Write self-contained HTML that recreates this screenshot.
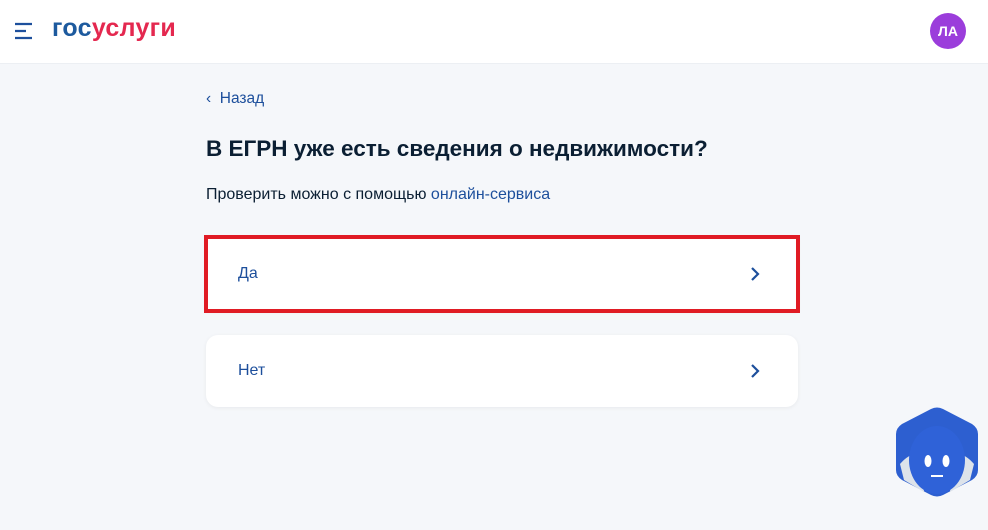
<!DOCTYPE html>
<html><head><meta charset="utf-8"><style>
body{margin:0;width:988px;height:530px;background:#f5f7fa;font-family:"Liberation Sans",sans-serif;position:relative;overflow:hidden}
.hdr{position:absolute;left:0;top:0;width:988px;height:63px;background:#fff;border-bottom:1px solid #eceff3}
.logo{position:absolute;left:52px;top:14px;font-size:25px;font-weight:bold;letter-spacing:0.3px}
.av{position:absolute;left:930px;top:13px;width:36px;height:36px;border-radius:50%;background:#9b3ddb;color:#fff;font-size:14px;font-weight:bold;text-align:center;line-height:36px}
.back{position:absolute;left:206px;top:90px;font-size:15.5px;color:#1d4f9c}
h1{position:absolute;left:206px;top:136px;margin:0;font-size:22.5px;font-weight:bold;color:#0b1f33}
.p{position:absolute;left:206px;top:186px;font-size:16px;color:#0b1f33}
.p span{color:#1d4f9c}
.card{position:absolute;left:206px;width:592px;height:72px;background:#fff;border-radius:12px;box-shadow:0 1px 4px rgba(0,0,0,.06)}
.card .t{position:absolute;left:32px;top:27px;font-size:16px;color:#1d4f9c}
.card svg{position:absolute;right:38px;top:28px}
</style></head><body>
<div class="hdr">
<svg style="position:absolute;left:15px;top:22px" width="20" height="18"><path d="M0 2h17M0 9h11M0 16h17" stroke="#1d4f9c" stroke-width="2.2"/></svg>
<div class="logo"><span style="color:#1d5a9e">гос</span><span style="color:#e4284f">услуги</span></div>
<div class="av">ЛА</div>
</div>
<div class="back">‹&nbsp;&nbsp;Назад</div>
<h1>В ЕГРН уже есть сведения о недвижимости?</h1>
<div class="p">Проверить можно с помощью <span>онлайн-сервиса</span></div>
<div class="card" style="border-radius:0;outline:4px solid #e01b24;outline-offset:-2px;top:237px;height:74px"><div class="t" style="top:28px">Да</div><svg width="10" height="16" style="top:29px"><path d="M2 2l6 6-6 6" fill="none" stroke="#1d4f9c" stroke-width="2.2"/></svg></div>
<div class="card" style="top:335px"><div class="t">Нет</div><svg width="10" height="16"><path d="M2 2l6 6-6 6" fill="none" stroke="#1d4f9c" stroke-width="2.2"/></svg></div>
<svg style="position:absolute;left:894px;top:406px" width="86" height="92">
<path d="M37 3Q43 0 49 3L78 18Q84 22 84 28V64Q84 70 78 74L49 89Q43 92 37 89L8 74Q2 70 2 64V28Q2 22 8 18Z" fill="#2d5fd0"/>
<path d="M6 58Q18 44 28 50L30 86L10 74Z" fill="#dde3ea"/>
<path d="M80 58Q68 44 58 50L56 86L76 74Z" fill="#dde3ea"/>
<ellipse cx="43" cy="54" rx="28" ry="34" fill="#2f62d8"/>
<ellipse cx="34" cy="55" rx="3.5" ry="6" fill="#fff"/>
<ellipse cx="52" cy="55" rx="3.5" ry="6" fill="#fff"/>
<rect x="37" y="69" width="12" height="2" fill="#fff"/>
</svg>
</body></html>
